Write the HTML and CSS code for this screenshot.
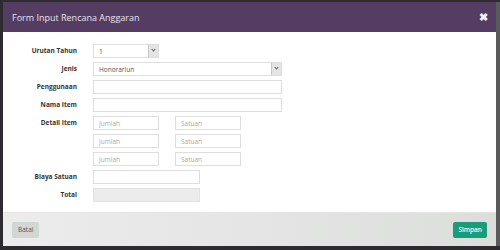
FILE: index.html
```html
<!DOCTYPE html>
<html lang="en">
	<head>
		<meta charset="UTF-8" />
		<title>Form Input Rencana Anggaran</title>
		<link rel="stylesheet" href="styles.css">
	</head>
	<body>
		<div class="modal">
			<header class="modal-header">
				<h4 class="modal-title">Form Input Rencana Anggaran</h4>
				<span class="close">&#10006;</span>
			</header>

			<form class="modal-body">
				<label class="label">Urutan Tahun</label>
				<div class="field">
					<div class="select short"><span>1</span><i class="caret"></i></div>
				</div>

				<label class="label">Jenis</label>
				<div class="field">
					<div class="select long"><span>Honorariun</span><i class="caret"></i></div>
				</div>

				<label class="label">Penggunaan</label>
				<div class="field"><input class="input long" type="text" /></div>

				<label class="label">Nama Item</label>
				<div class="field"><input class="input long" type="text" /></div>

				<label class="label">Detail Item</label>
				<div class="field pair">
					<input class="input short" type="text" placeholder="Jumlah" />
					<input class="input short" type="text" placeholder="Satuan" />
				</div>

				<span></span>
				<div class="field pair">
					<input class="input short" type="text" placeholder="Jumlah" />
					<input class="input short" type="text" placeholder="Satuan" />
				</div>

				<span></span>
				<div class="field pair">
					<input class="input short" type="text" placeholder="Jumlah" />
					<input class="input short" type="text" placeholder="Satuan" />
				</div>

				<label class="label">Biaya Satuan</label>
				<div class="field"><input class="input medium" type="text" /></div>

				<label class="label">Total</label>
				<div class="field"><input class="input medium" type="text" disabled /></div>
			</form>

			<footer class="modal-footer">
				<button class="btn btn-default" type="button">Batal</button>
				<button class="btn btn-success" type="button">Simpan</button>
			</footer>
		</div>
	</body>
</html>
```

FILE: styles.css
```css
* {
	margin: 0;
	padding: 0;
	box-sizing: border-box;
}

body {
	font-family: "Open Sans", "Liberation Sans", sans-serif;
	background: #2e2b30;
	width: 500px;
	height: 250px;
	overflow: hidden;
}

.modal {
	margin: 2px 4px 0 3px;
	height: 244px;
	display: flex;
	flex-direction: column;
	background: #fff;
	box-shadow: 4px 0 0 #5a5a5a;
}

.modal-header {
	height: 30px;
	flex: none;
	background: #553c63;
	display: flex;
	align-items: center;
	justify-content: space-between;
	padding: 0 8px 0 9px;
}

.modal-title {
	font-size: 9px;
	font-weight: 400;
	color: #e6e4ee;
}

.close {
	color: #f2f2f6;
	font-size: 11px;
	font-weight: 700;
	margin-top: -1px;
}

.modal-body {
	flex: 1;
	display: grid;
	grid-template-columns: 74px 1fr;
	column-gap: 16px;
	row-gap: 4px;
	align-content: start;
	padding-top: 12px;
}

.label {
	font-size: 6.5px;
	font-weight: 700;
	color: #333;
	text-align: right;
	line-height: 14px;
}

.field {
	display: flex;
	height: 14px;
}

.pair {
	gap: 16px;
}

.input,
.select {
	height: 14px;
	border: 1px solid #dedede;
	background: #fff;
	font-family: inherit;
	font-size: 6.5px;
	color: #555;
	padding: 0 5px;
	outline: none;
}

.input::placeholder {
	color: #aaa;
}

.input:disabled {
	background: #ececec;
	border-color: #e2e2e2;
}

.select {
	display: flex;
	align-items: center;
	justify-content: space-between;
	padding-right: 0;
}

.caret {
	width: 10px;
	height: 12px;
	background: #e4e4e4;
	border-left: 1px solid #c8c8c8;
	position: relative;
}

.caret::after {
	content: "";
	position: absolute;
	left: 3px;
	top: 3px;
	width: 2px;
	height: 2px;
	border-right: 1px solid #666;
	border-bottom: 1px solid #666;
	transform: rotate(45deg);
}

.short {
	width: 66px;
}

.medium {
	width: 107px;
}

.long {
	width: 189px;
}

.modal-footer {
	height: 34px;
	flex: none;
	background: linear-gradient(to right, #ececec, #dcdedc);
	border-top: 1px solid #e4e4e4;
	display: flex;
	align-items: center;
	justify-content: space-between;
	padding: 0 9px 0 9px;
}

.btn {
	height: 16px;
	border: none;
	border-radius: 2px;
	font-family: inherit;
	font-size: 6.5px;
	padding: 0 6px;
}

.btn-default {
	background: #d3d7d3;
	color: #555;
}

.btn-success {
	background: #1b9c78;
	color: #fff;
	font-weight: 600;
	padding: 0 5px;
}
```
